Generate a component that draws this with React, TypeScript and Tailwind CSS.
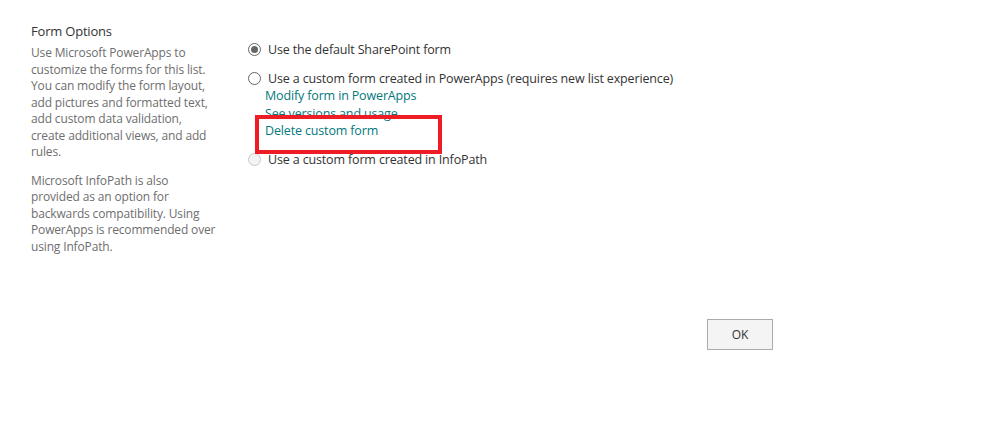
import { FC } from 'react';

const Radio: FC<{ checked?: boolean; disabled?: boolean }> = ({ checked, disabled }) => {
  return (
    <span
      className={`flex items-center justify-center w-[13px] h-[13px] rounded-full border shrink-0 ${
        disabled ? 'border-[#c8c8c8] bg-[#f4f4f4]' : 'border-[#666] bg-white'
      }`}
    >
      {checked && <span className="w-[7px] h-[7px] rounded-full bg-[#666]" />}
    </span>
  );
};

const App: FC = () => {
  return (
    <div
      className="relative w-[984px] h-[447px] bg-white flex text-[13px] text-[#333]"
      style={{ fontFamily: '"Open Sans", "Noto Sans", sans-serif' }}
    >
      <div className="w-[216px] pl-[31px] pt-[23px] shrink-0">
        <h2 className="text-[13px] leading-[17px] text-[#333] tracking-[-0.2px]">Form Options</h2>
        <div className="mt-[5px] w-[186px] text-[12px] leading-[16.5px] text-[#6e6e6e] tracking-[-0.15px]">
          <p>
            Use Microsoft PowerApps to customize the forms for this list. You can modify the form layout, add pictures
            and formatted text, add custom data validation, create additional views, and add rules.
          </p>
          <p className="mt-[12px]">
            Microsoft InfoPath is also provided as an option for backwards compatibility. Using PowerApps is
            recommended over using InfoPath.
          </p>
        </div>
      </div>

      <div className="flex-1 pt-[41px] pl-[32px] text-[12.5px] leading-[17px] tracking-[-0.15px]">
        <label className="flex items-center gap-[7px]">
          <Radio checked />
          <span>Use the default SharePoint form</span>
        </label>

        <label className="flex items-center gap-[7px] mt-[12px]">
          <Radio />
          <span>Use a custom form created in PowerApps (requires new list experience)</span>
        </label>
        <div className="pl-[17px] flex flex-col text-[#03787c]">
          <a className="leading-[17.5px]">Modify form in PowerApps</a>
          <a className="leading-[17.5px]">See versions and usage</a>
          <a className="leading-[17.5px]">Delete custom form</a>
        </div>

        <label className="flex items-center gap-[7px] mt-[11px]">
          <Radio disabled />
          <span>Use a custom form created in InfoPath</span>
        </label>

        <div className="flex justify-end w-[525px] mt-[151px]">
          <button className="w-[66px] h-[31px] border border-[#ababab] bg-[#f4f4f4] text-[12px] text-[#333]">
            OK
          </button>
        </div>
      </div>

      <div className="absolute left-[255px] top-[115px] w-[187px] h-[39px] border-[4px] border-[#ee1c25]" />
    </div>
  );
};

export default App;
